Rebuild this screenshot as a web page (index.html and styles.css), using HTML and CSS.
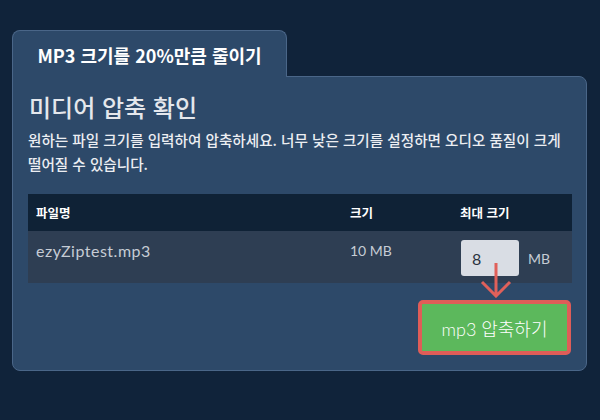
FILE: index.html
```html
<!DOCTYPE html>
<html lang="ko">
<head>
<meta charset="utf-8">
<title>MP3 압축</title>
<link rel="stylesheet" href="styles.css">
</head>
<body>
<div class="page">
  <div class="tab">MP3 크기를 20%만큼 줄이기</div>
  <div class="panel">
    <h2 class="heading">미디어 압축 확인</h2>
    <p class="desc">원하는 파일 크기를 입력하여 압축하세요. 너무 낮은 크기를 설정하면 오디오 품질이 크게 떨어질 수 있습니다.</p>
    <table class="files">
      <thead>
        <tr>
          <th class="c1">파일명</th>
          <th class="c2">크기</th>
          <th class="c3">최대 크기</th>
        </tr>
      </thead>
      <tbody>
        <tr>
          <td class="c1 fname">ezyZiptest.mp3</td>
          <td class="c2">10 MB</td>
          <td class="c3 maxcell">
            <div class="maxwrap">
              <div class="inputwrap">
                <input class="sizeinput" type="text" value="8">
                <svg class="arrow" width="32" height="36" viewBox="0 0 32 36">
                  <path d="M16 1 V34 M2 20 L16 34 L30 20" fill="none" stroke="#e0605a" stroke-width="3"/>
                </svg>
              </div>
              <span class="unit">MB</span>
            </div>
          </td>
        </tr>
      </tbody>
    </table>
    <div class="actions">
      <button class="compress">mp3 압축하기</button>
    </div>
  </div>
</div>
</body>
</html>
```

FILE: styles.css
```css
* { box-sizing: border-box; }

body {
  margin: 0;
  background: #10233a;
  font-family: "Noto Sans CJK KR", "Noto Sans", sans-serif;
  color: #e6e9ee;
}

.page {
  padding: 30px 13px 0 12px;
  width: 600px;
  height: 420px;
}

.tab {
  position: relative;
  z-index: 1;
  width: 275px;
  height: 47px;
  margin-bottom: -1px;
  background: #2d4969;
  border: 1px solid #4a6688;
  border-bottom: none;
  border-radius: 8px 8px 0 0;
  display: flex;
  align-items: center;
  justify-content: center;
  padding-top: 2px;
  font-size: 18px;
  font-weight: 700;
  color: #ffffff;
}

.panel {
  background: #2d4969;
  border: 1px solid #4a6688;
  border-radius: 0 8px 8px 8px;
  padding: 13px 15px 15px 15px;
}

.heading {
  margin: 0;
  font-size: 24px;
  font-weight: 500;
  line-height: 34px;
  color: #e4e7ec;
  padding-left: 1px;
}

.desc {
  margin: 4px 0 18px 0;
  font-size: 14.6px;
  font-weight: 500;
  line-height: 24px;
  color: #eceef2;
  word-break: keep-all;
}

.files {
  width: 544px;
  border-collapse: collapse;
  table-layout: fixed;
  font-family: "Lato", "Noto Sans CJK KR", sans-serif;
}

.files th {
  height: 37px;
  background: #0f2236;
  text-align: left;
  padding: 0 8px;
  font-size: 12.5px;
  font-weight: 700;
  color: #ffffff;
  font-family: "Noto Sans CJK KR", sans-serif;
}

.files td {
  height: 52px;
  background: #2e3e53;
  vertical-align: top;
  padding: 10px 8px 0 8px;
  font-size: 14px;
  line-height: 20px;
  color: #c6ccd5;
}

.files td.fname {
  font-size: 16px;
  letter-spacing: 0.5px;
}

.files .c1 { width: 314px; }
.files .c2 { width: 110px; }
.files .c3 { width: 120px; }

.files td.maxcell {
  padding: 9px 0 0 9px;
}

.maxwrap {
  display: flex;
  align-items: center;
  gap: 9px;
}

.inputwrap {
  position: relative;
  width: 58px;
  height: 36px;
}

.sizeinput {
  width: 58px;
  height: 36px;
  border: none;
  border-radius: 3px;
  background: #d9dde4;
  padding: 0 0 0 11px;
  font-family: "Lato", sans-serif;
  font-size: 16px;
  color: #2a3240;
  outline: none;
}

.arrow {
  position: absolute;
  left: 19px;
  top: 22px;
}

.unit {
  font-size: 14px;
  color: #c6ccd5;
  padding-top: 1px;
}

.actions {
  display: flex;
  justify-content: flex-end;
  margin-top: 17px;
}

.compress {
  width: 153px;
  height: 55px;
  border: 4px solid #df5d58;
  border-radius: 5px;
  background: #5cb85c;
  color: #ffffff;
  font-family: "Lato", "Noto Sans CJK KR", sans-serif;
  font-size: 18px;
  font-weight: 300;
  padding: 0;
}
```
